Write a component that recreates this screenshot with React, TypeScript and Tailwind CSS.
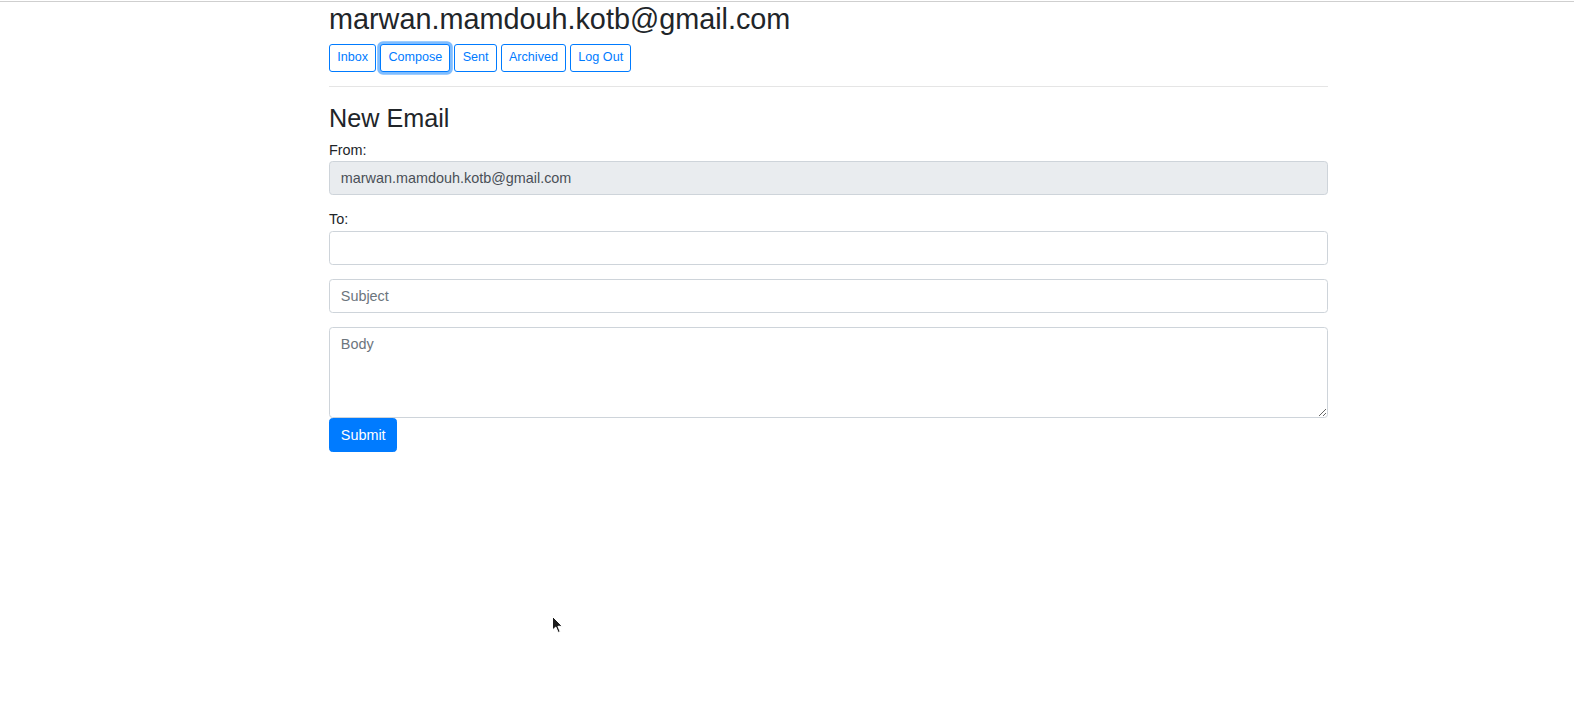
import React from 'react'

const navButtons = ['Inbox', 'Compose', 'Sent', 'Archived', 'Log Out']

function Cursor() {
  return (
    <svg className="absolute left-[551px] top-[614px]" width="14" height="20" viewBox="0 0 14 20">
      <path d="M1.5 1.5 L1.5 15 L4.8 12 L7.2 17.5 L9.2 16.6 L6.9 11.3 L11.3 11.3 Z" fill="#1a1a1a" stroke="#ffffff" strokeWidth="1" />
    </svg>
  )
}

const inputBase =
  'block w-full h-[34.2px] px-[10.8px] text-[14.4px] text-[#495057] border border-[#ced4da] rounded-[3.6px] outline-none'

export default function App() {
  return (
    <div className="relative min-h-[722px] bg-white font-['Liberation_Sans',Arial,sans-serif] text-[14.4px] leading-[21.6px] text-[#212529]">
      <div className="h-px bg-[#cfcfcf] mt-px" />
      <div className="ml-[329px] w-[999px]">
        <h2 className="text-[28.8px] leading-[34.5px] mb-[7px] mt-0">marwan.mamdouh.kotb@gmail.com</h2>

        <div className="flex gap-[4px]">
          {navButtons.map((label) => (
            <button
              key={label}
              className={`h-[28px] px-[7.2px] text-[12.6px] leading-[18.9px] text-[#007bff] border border-[#007bff] rounded-[3px] bg-white ${
                label === 'Compose' ? 'shadow-[0_0_0_2.8px_rgba(0,123,255,0.5)]' : ''
              }`}
            >
              {label}
            </button>
          ))}
        </div>

        <hr className="mt-[14px] mb-[16px] border-0 border-t border-[rgba(0,0,0,0.1)]" />

        <h3 className="text-[25.2px] leading-[30.2px] mb-[7px]">New Email</h3>

        <form>
          <div className="mb-[14px]">
            From:
            <input
              disabled
              value="marwan.mamdouh.kotb@gmail.com"
              className={`${inputBase} bg-[#e9ecef]`}
            />
          </div>
          <div className="mb-[14px]">
            To:
            <input className={`${inputBase} bg-white`} />
          </div>
          <div className="mb-[14px]">
            <input placeholder="Subject" className={`${inputBase} bg-white placeholder:text-[#6c757d]`} />
          </div>
          <textarea
            placeholder="Body"
            className="block w-full h-[91px] px-[10.8px] py-[5.4px] text-[14.4px] leading-[21.6px] text-[#495057] placeholder:text-[#6c757d] bg-white border border-[#ced4da] rounded-[3.6px] outline-none"
          />
          <button
            type="button"
            className="h-[34px] px-[10.8px] text-[14.4px] leading-[21.6px] text-white bg-[#007bff] border border-[#007bff] rounded-[3.6px]"
          >
            Submit
          </button>
        </form>
      </div>
      <Cursor />
    </div>
  )
}
